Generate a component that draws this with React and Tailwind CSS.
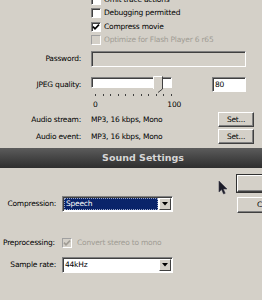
import React from "react";

function Check({ checked, disabled }) {
  return (
    <div
      className={
        disabled
          ? "w-[10px] h-[10px] shrink-0 border border-t-[#a0a0a0] border-l-[#a0a0a0] border-b-white border-r-white bg-[#d4d0c8] flex items-center justify-center"
          : "w-[10px] h-[10px] shrink-0 border border-t-[#808080] border-l-[#808080] border-b-white border-r-white shadow-[inset_1px_1px_0_#404040] bg-white flex items-center justify-center"
      }
    >
      {checked && (
        <svg width="8" height="8" viewBox="0 0 8 8">
          <path
            d="M1 3.6 L3 5.8 L7 1.6"
            stroke={disabled ? "#a09c94" : "#000"}
            strokeWidth="1.6"
            fill="none"
          />
        </svg>
      )}
    </div>
  );
}

function CheckRow({ label, checked, disabled }) {
  return (
    <div className="h-[13.5px] flex items-center gap-[3px]">
      <Check checked={checked} disabled={disabled} />
      <span className={disabled ? "text-[#a09c94] whitespace-nowrap" : "text-black whitespace-nowrap"}>
        {label}
      </span>
    </div>
  );
}

function SetButton() {
  return (
    <div className="h-[15px] w-[36px] border border-t-white border-l-white border-b-[#404040] border-r-[#404040] shadow-[inset_-1px_-1px_0_#808080] flex items-center justify-center text-black">
      Set...
    </div>
  );
}

function DropBtn() {
  return (
    <div className="w-[12px] h-[12px] shrink-0 bg-[#d4d0c8] border border-t-white border-l-white border-b-[#404040] border-r-[#404040] flex items-center justify-center">
      <svg width="6" height="4" viewBox="0 0 6 4">
        <path d="M0 0 L6 0 L3 3.5 Z" fill="#000" />
      </svg>
    </div>
  );
}

export default function App() {
  const ticks = Array.from({ length: 11 });
  return (
    <div className="w-[262px] h-[300px] overflow-hidden bg-[#d4d0c8] relative font-['DejaVu_Sans',sans-serif] text-[7.5px] tracking-[-0.22px] leading-[8px] text-black">
      {/* Top panel */}
      <div className="h-[148px] overflow-hidden flex flex-col">
        <div className="-mt-[7px] flex flex-col pl-[91px]">
          <CheckRow label="Omit trace actions" />
          <CheckRow label="Debugging permitted" />
          <CheckRow label="Compress movie" checked />
          <CheckRow label="Optimize for Flash Player 6 r65" disabled />
        </div>

        <div className="mt-[4px] grid grid-cols-[81px_155px] gap-x-[10px] items-center">
          <div className="text-right">Password:</div>
          <div className="h-[16px] bg-[#d4d0c8] border border-t-[#808080] border-l-[#808080] border-b-white border-r-white shadow-[inset_1px_1px_0_#404040]" />
        </div>

        <div className="mt-[10px] flex items-start">
          <div className="w-[81px] h-[15px] flex items-center justify-end">JPEG quality:</div>
          <div className="ml-[10px] w-[81px] flex flex-col">
            <div className="relative h-[11px] w-[81px] bg-white border border-t-[#808080] border-l-[#808080] border-b-white border-r-white shadow-[inset_1px_1px_0_#404040]">
              <svg className="absolute left-[61px] -top-[2px]" width="10" height="17" viewBox="0 0 10 17">
                <path d="M0.5 0.5 H9.5 V13 L5 16.5 L0.5 13 Z" fill="#d4d0c8" />
                <path d="M0.5 13 V0.5 H9" stroke="#fff" strokeWidth="1" fill="none" />
                <path d="M9.5 0.5 V13 L5 16.5" stroke="#404040" strokeWidth="1" fill="none" />
              </svg>
            </div>
            <div className="mt-[6px] ml-[4px] w-[77px] h-[3px] flex justify-between">
              {ticks.map((_, i) => (
                <div key={i} className="w-[1px] h-[2px] bg-[#404040]" />
              ))}
            </div>
            <div className="mt-[4px] ml-[2px] w-[88px] flex justify-between">
              <span>0</span>
              <span>100</span>
            </div>
          </div>
          <div className="ml-[40px] w-[34px] h-[15px] bg-white border border-t-[#808080] border-l-[#808080] border-b-white border-r-white shadow-[inset_1px_1px_0_#404040] flex items-center pl-[2px]">
            80
          </div>
        </div>

        <div className="mt-[3px] grid grid-cols-[81px_117px_36px] gap-x-[10px] gap-y-[2px] items-center">
          <div className="text-right">Audio stream:</div>
          <div className="whitespace-nowrap">MP3, 16 kbps, Mono</div>
          <SetButton />
          <div className="text-right">Audio event:</div>
          <div className="whitespace-nowrap">MP3, 16 kbps, Mono</div>
          <SetButton />
        </div>
      </div>

      {/* Header */}
      <div className="h-[20px] bg-gradient-to-b from-[#5c5c5c] to-[#2e2e2e] flex items-center justify-center pl-[24px]">
        <span className="text-[9.5px] tracking-[0px] leading-[10px] font-bold text-[#d6d6d6]">Sound Settings</span>
      </div>

      {/* Lower panel */}
      <div className="h-[132px] flex">
        <div className="w-[237px] shrink-0 flex flex-col pt-[28px]">
          <div className="flex items-center">
            <div className="w-[56px] text-right whitespace-nowrap">Compression:</div>
            <div className="ml-[6px] w-[111px] h-[16px] bg-white border border-t-[#808080] border-l-[#808080] border-b-white border-r-white shadow-[inset_1px_1px_0_#404040] flex items-center pl-[1px] pr-[1px] gap-[1px]">
              <div className="flex-1 h-[12px] bg-[#0a246a] border border-dotted border-[#9aa6c8] text-white flex items-center pl-[1px]">
                Speech
              </div>
              <DropBtn />
            </div>
          </div>

          <div className="mt-[26px] h-[10px] flex items-center">
            <div className="w-[59px] whitespace-nowrap pl-[3px]">Preprocessing:</div>
            <div className="ml-[3px] flex items-center gap-[5px]">
              <Check checked disabled />
              <span className="text-[#a09c94] whitespace-nowrap">Convert stereo to mono</span>
            </div>
          </div>

          <div className="mt-[9px] flex items-center">
            <div className="w-[56px] text-right whitespace-nowrap">Sample rate:</div>
            <div className="ml-[6px] w-[111px] h-[16px] bg-white border border-t-[#808080] border-l-[#808080] border-b-white border-r-white shadow-[inset_1px_1px_0_#404040] flex items-center pl-[2px] pr-[1px]">
              <div className="flex-1">44kHz</div>
              <DropBtn />
            </div>
          </div>
        </div>

        <div className="flex flex-col pt-[7px] shrink-0">
          <div className="w-[63px] h-[17px] border border-t-white border-l-white border-b-[#404040] border-r-[#404040] shadow-[inset_-1px_-1px_0_#808080] outline outline-1 outline-[#303030] flex items-center justify-start pl-[40px]">
            OK
          </div>
          <div className="mt-[5px] w-[63px] h-[16px] border border-t-white border-l-white border-b-[#404040] border-r-[#404040] shadow-[inset_-1px_-1px_0_#808080] flex items-center justify-start pl-[19px]">
            Cancel
          </div>
        </div>
      </div>

      {/* Mouse cursor */}
      <svg className="absolute left-[218px] top-[180px]" width="11" height="15" viewBox="0 0 11 15">
        <path d="M1 1 L1 12 L3.6 9.6 L5.6 14 L7.2 13.3 L5.3 9 L9 9 Z" fill="#1c1c28" stroke="#3a3a4a" strokeWidth="0.6" />
      </svg>
    </div>
  );
}
